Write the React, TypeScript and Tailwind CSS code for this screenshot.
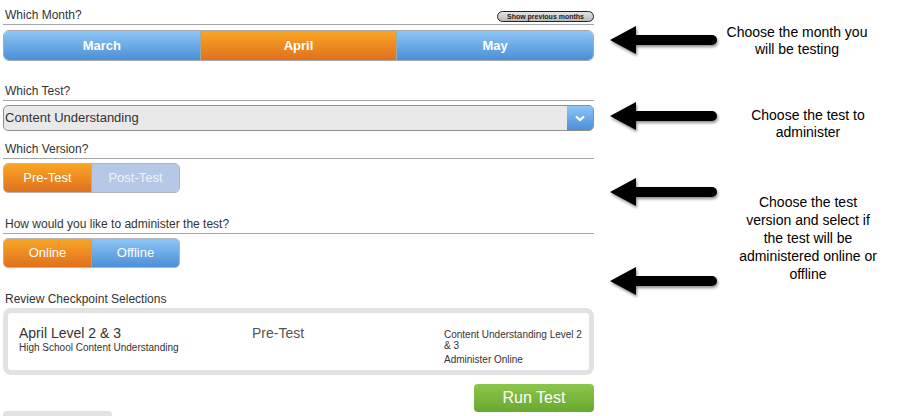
const font = { fontFamily: '"Liberation Sans", Arial, sans-serif' };

function Label({ text, className = '', line = true }: { text: string; className?: string; line?: boolean }) {
  return (
    <div className={`${line ? 'border-b border-[#a6a6a6] pb-[2px]' : ''} pl-[2px] text-[12px] leading-[14px] text-[#333] ${className}`}>
      {text}
    </div>
  );
}

function Arrow() {
  return (
    <svg width="112" height="34" viewBox="0 0 112 34" className="block">
      <defs>
        <filter id="sh" x="-10%" y="-30%" width="130%" height="170%">
          <feDropShadow dx="1" dy="2" stdDeviation="1.5" floodColor="#000" floodOpacity="0.45" />
        </filter>
      </defs>
      <g filter="url(#sh)">
        <polygon points="2,15 28,1 28,29" fill="#000" />
        <line x1="26" y1="15" x2="104" y2="15" stroke="#000" strokeWidth="10" strokeLinecap="round" />
      </g>
    </svg>
  );
}

const blue = 'bg-gradient-to-b from-[#8cc6f6] to-[#4b8fd6]';
const orange = 'bg-gradient-to-b from-[#f9a624] to-[#e0701e]';

export default function App() {
  return (
    <div className="relative w-[901px] h-[416px] overflow-hidden bg-white" style={font}>
      <div className="w-[591px] ml-[3px] flex flex-col">
        {/* Month */}
        <div className="relative mt-[8px]">
          <Label text="Which Month?" />
          <div className="absolute right-0 top-[3px] h-[11px] w-[97px] rounded-full border border-[#222] bg-gradient-to-b from-[#e4e4e4] to-[#b9b9b9] text-[7px] leading-[9px] font-bold text-center text-[#222]">
            Show previous months
          </div>
        </div>
        <div className="mt-[5px] h-[31px] flex rounded-[6px] overflow-hidden border border-[#a9a9a9] text-white text-[13px] font-bold">
          <div className={`${blue} flex-1 flex items-center justify-center border-r border-[#9aa]`}>March</div>
          <div className={`${orange} flex-1 flex items-center justify-center`}>April</div>
          <div className={`${blue} flex-1 flex items-center justify-center border-l border-[#9aa]`}>May</div>
        </div>

        {/* Test */}
        <Label text="Which Test?" className="mt-[23px]" />
        <div className="mt-[4px] h-[26px] flex rounded-[5px] overflow-hidden border border-[#8f8f8f] bg-[#e9e9e9]">
          <div className="flex-1 flex items-center pl-[1px] text-[13px] text-[#333]">Content Understanding</div>
          <div className={`${blue} w-[26px] flex items-center justify-center`}>
            <svg width="10" height="7" viewBox="0 0 10 7">
              <polyline points="1,1.5 5,5 9,1.5" fill="none" stroke="#fff" strokeWidth="2.2" />
            </svg>
          </div>
        </div>

        {/* Version */}
        <Label text="Which Version?" className="mt-[11px]" />
        <div className="mt-[4px] h-[30px] w-[177px] flex rounded-[5px] overflow-hidden border border-[#b5b5b5] text-[13px] text-white">
          <div className={`${orange} flex-1 flex items-center justify-center`}>Pre-Test</div>
          <div className="flex-1 flex items-center justify-center bg-[#b6c8e7] text-[#eef2fa] border-l border-[#9fb0cf]">Post-Test</div>
        </div>

        {/* Administer */}
        <Label text="How would you like to administer the test?" className="mt-[24px]" />
        <div className="mt-[4px] h-[30px] w-[177px] flex rounded-[5px] overflow-hidden border border-[#b5b5b5] text-[13px] text-white">
          <div className={`${orange} flex-1 flex items-center justify-center`}>Online</div>
          <div className={`${blue} flex-1 flex items-center justify-center border-l border-[#9aa]`}>Offline</div>
        </div>

        {/* Review */}
        <Label text="Review Checkpoint Selections" line={false} className="mt-[24px]" />
        <div className="mt-[2px] h-[67px] rounded-[8px] border-[5px] border-[#e2e2e2] bg-white flex pt-[12px] pl-[11px] text-[#333]">
          <div className="w-[233px]">
            <div className="text-[14px] leading-[16px]">April Level 2 &amp; 3</div>
            <div className="text-[10px] leading-[12px] mt-[1px]">High School Content Understanding</div>
          </div>
          <div className="w-[192px] text-[14px] leading-[16px] text-[#555]">Pre-Test</div>
          <div className="w-[142px] text-[10px] leading-[11px] pt-[4px]">
            <div>Content Understanding Level 2 &amp; 3</div>
            <div className="mt-[3px]">Administer Online</div>
          </div>
        </div>

        <div className="mt-[9px] flex justify-end">
          <div className="h-[28px] w-[120px] rounded-[4px] bg-gradient-to-b from-[#8dc54b] to-[#68a92f] flex items-center justify-center text-white text-[16px]">
            Run Test
          </div>
        </div>
        <div className="-mt-[1px] h-[6px] w-[109px] rounded-t-[4px] bg-[#e2e2e2]" />
      </div>

      {/* Annotations */}
      <div className="absolute left-[608px] top-[25px]"><Arrow /></div>
      <div className="absolute left-[608px] top-[101px]"><Arrow /></div>
      <div className="absolute left-[608px] top-[177px]"><Arrow /></div>
      <div className="absolute left-[608px] top-[266px]"><Arrow /></div>

      <div className="absolute left-[721px] top-[24px] w-[152px] text-center text-[14px] leading-[17px] text-black">
        Choose the month you will be testing
      </div>
      <div className="absolute left-[732px] top-[107px] w-[152px] text-center text-[14px] leading-[17px] text-black">
        Choose the test to administer
      </div>
      <div className="absolute left-[737px] top-[193px] w-[142px] text-center text-[14px] leading-[18px] text-black">
        Choose the test version and select if the test will be administered online or offline
      </div>
    </div>
  );
}
